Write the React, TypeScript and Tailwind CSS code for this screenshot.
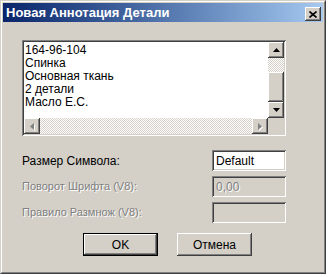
const raised =
  "shadow-[inset_-1px_-1px_0_#404040,inset_1px_1px_0_#ffffff,inset_-2px_-2px_0_#808080,inset_2px_2px_0_#d4d0c8]";
const sunken =
  "shadow-[inset_1px_1px_0_#808080,inset_-1px_-1px_0_#ffffff,inset_2px_2px_0_#404040,inset_-2px_-2px_0_#d4d0c8]";
const checker =
  "bg-[image:repeating-conic-gradient(#ffffff_0_25%,#d4d0c8_0_50%)] bg-[length:2px_2px]";

const Arrow = ({ dir, disabled }: { dir: "up" | "down" | "left" | "right"; disabled?: boolean }) => {
  const pts = {
    up: "3.5,0 7,4 0,4",
    down: "0,0 7,0 3.5,4",
    left: "4,0 4,7 0,3.5",
    right: "0,0 4,3.5 0,7",
  }[dir];
  const vertical = dir === "up" || dir === "down";
  return (
    <svg width={vertical ? 7 : 4} height={vertical ? 4 : 7} viewBox={vertical ? "0 0 7 4" : "0 0 4 7"} className="overflow-visible">
      {disabled && <polygon points={pts} fill="#ffffff" transform="translate(1,1)" />}
      <polygon points={pts} fill={disabled ? "#808080" : "#000000"} />
    </svg>
  );
};

const ScrollBtn = ({ dir, disabled }: { dir: "up" | "down" | "left" | "right"; disabled?: boolean }) => (
  <div className={`w-[16px] h-[16px] bg-[#d4d0c8] flex items-center justify-center ${raised}`}>
    <Arrow dir={dir} disabled={disabled} />
  </div>
);

const Row = ({ label, value, disabled }: { label: string; value: string; disabled?: boolean }) => (
  <div className="flex items-center justify-between h-[21px]">
    <span
      className={
        disabled ? "text-[#808080] [text-shadow:1px_1px_0_#ffffff]" : "text-black text-[12px]"
      }
    >
      {label}
    </span>
    <div
      className={`w-[74px] h-[21px] px-[4px] flex items-center text-[12px] ${sunken} ${
        disabled ? "bg-[#d4d0c8] text-[#808080] [text-shadow:1px_1px_0_#ffffff]" : "bg-white text-black"
      }`}
    >
      {value}
    </div>
  </div>
);

export default function App() {
  const lines = ["164-96-104", "Спинка", "Основная ткань", "2 детали", "Масло Е.С."];
  return (
    <div className="w-[329px] h-[277px] bg-white font-['Liberation_Sans',Arial,sans-serif] text-[11px] leading-none">
      <div className="w-[326px] h-[274px] border border-t-[#d4d0c8] border-l-[#d4d0c8] border-r-[#404040] border-b-[#404040]">
        <div className="w-full h-full bg-[#d4d0c8] border border-t-white border-l-white border-r-[#808080] border-b-[#808080] p-px">
          {/* Заголовок */}
          <div className="h-[19px] flex items-center justify-between pl-[3px] pr-[2px] bg-gradient-to-r from-[#0a246a] to-[#a6caf0]">
            <span className="text-white font-bold text-[13px]">Новая Аннотация Детали</span>
            <div className={`w-[16px] h-[14px] mt-[3px] bg-[#d4d0c8] flex items-center justify-center ${raised}`}>
              <svg width="8" height="7" viewBox="0 0 8 7">
                <path d="M0.5 0.5 L7.5 6.5 M7.5 0.5 L0.5 6.5" stroke="#000" strokeWidth="1.6" />
              </svg>
            </div>
          </div>

          <div className="pl-[19px] pr-[37px] pt-[18px]">
            {/* Список */}
            <div className={`h-[96px] p-[2px] bg-white flex flex-col ${sunken}`}>
              <div className="flex flex-1">
                <div className="flex-1 pl-[1px] pt-[2px] text-[12px] leading-[13px]">
                  {lines.map((l) => (
                    <div key={l}>{l}</div>
                  ))}
                </div>
                <div className="w-[16px] flex flex-col">
                  <ScrollBtn dir="up" />
                  <div className={`h-[14px] ${checker}`} />
                  <div className={`flex-1 bg-[#d4d0c8] ${raised}`} />
                  <ScrollBtn dir="down" />
                </div>
              </div>
              <div className="h-[16px] flex">
                <ScrollBtn dir="left" disabled />
                <div className={`flex-1 ${checker}`} />
                <ScrollBtn dir="right" disabled />
                <div className="w-[16px] bg-[#d4d0c8]" />
              </div>
            </div>

            {/* Поля */}
            <div className="mt-[14px] flex flex-col gap-[5px]">
              <Row label="Размер Символа:" value="Default" />
              <Row label="Поворот Шрифта (V8):" value="0,00" disabled />
              <Row label="Правило Размнож (V8):" value="" disabled />
            </div>

            {/* Кнопки */}
            <div className="mt-[10px] flex gap-[19px] pl-[61px] text-[12px]">
              <div className="w-[75px] h-[23px] border border-black">
                <div className={`w-full h-full bg-[#d4d0c8] flex items-center justify-center ${raised}`}>OK</div>
              </div>
              <div className={`w-[75px] h-[23px] bg-[#d4d0c8] flex items-center justify-center ${raised}`}>
                Отмена
              </div>
            </div>
          </div>
        </div>
      </div>
    </div>
  );
}
